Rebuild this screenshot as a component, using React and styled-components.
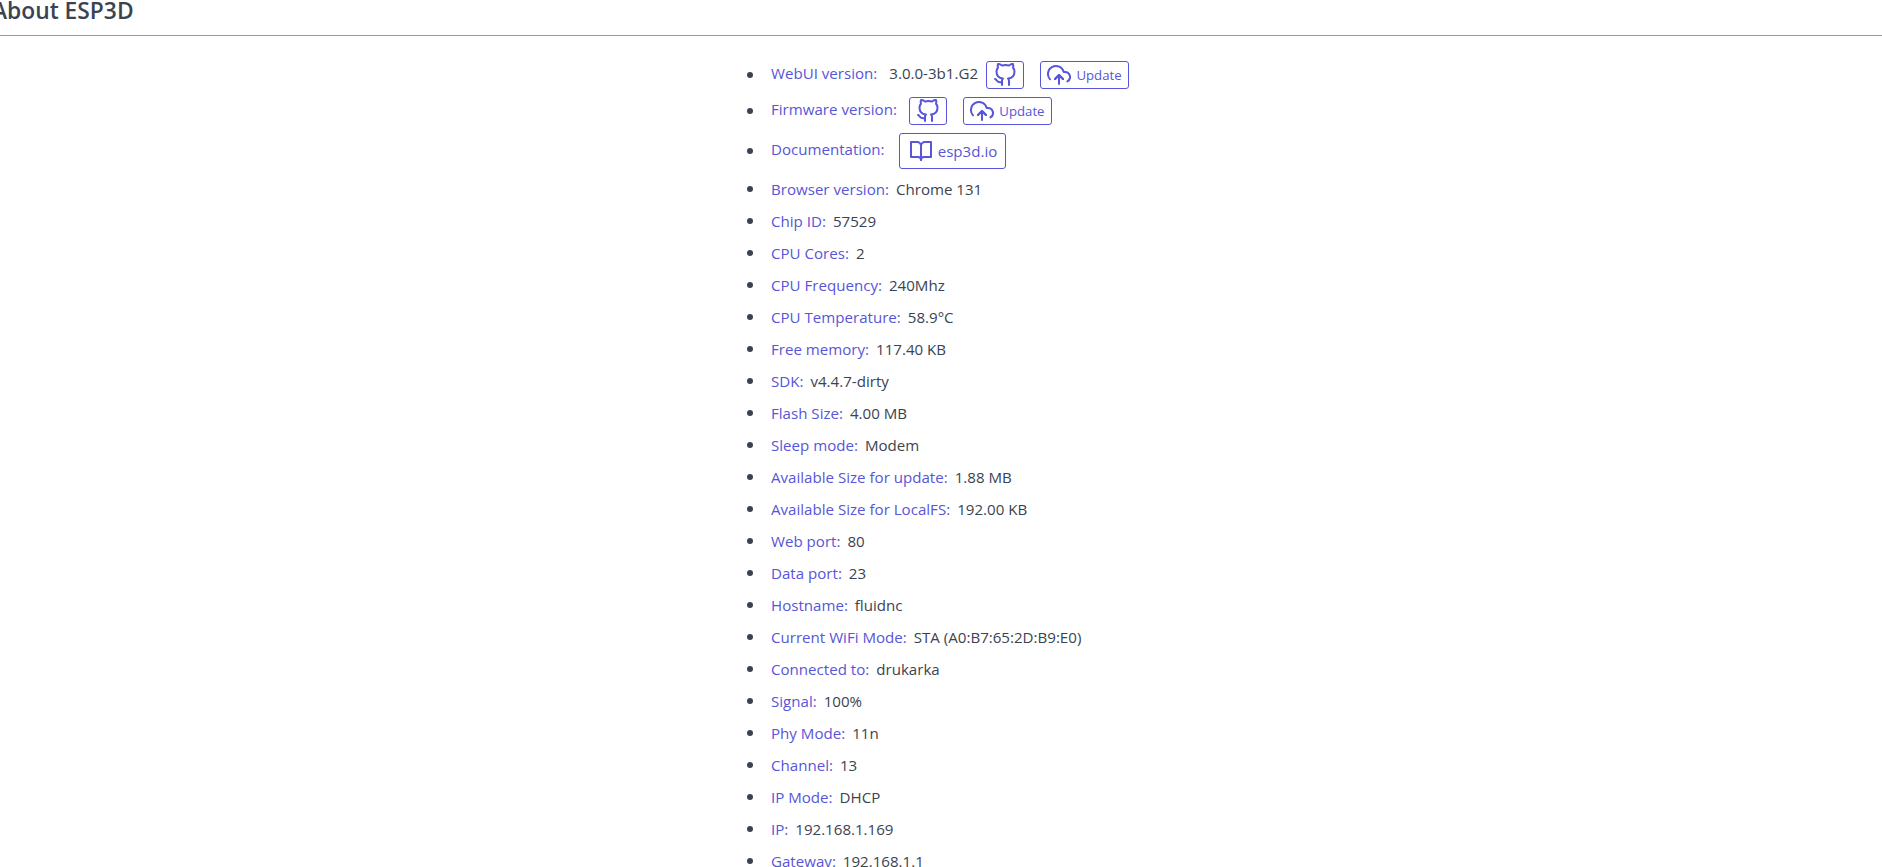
import styled, { createGlobalStyle } from 'styled-components';
import { FiGithub, FiUploadCloud, FiBookOpen } from 'react-icons/fi';

const GlobalStyle = createGlobalStyle`
  html, body {
    margin: 0;
    height: 100%;
    overflow: hidden;
    background: #fff;
  }
  body {
    font-family: 'Open Sans', 'Noto Sans', sans-serif;
    font-size: 15.1px;
    color: #3b4351;
  }
`;

const Page = styled.div`
  height: 867px;
  overflow: hidden;
`;

const Header = styled.div`
  height: 35px;
  border-bottom: 1px solid #999;
  margin-bottom: 25px;
`;

const Title = styled.h4`
  margin: 0 0 0 -8px;
  font-size: 22.8px;
  font-weight: 600;
  line-height: 22px;
  color: #3b4351;
`;

const List = styled.ul`
  list-style: none;
  margin: 0;
  padding: 0 0 0 747px;
`;

const Item = styled.li`
  display: flex;
  align-items: center;
  min-height: ${(p) => p.$height || 32}px;
  margin-bottom: ${(p) => p.$gap || 0}px;
  white-space: nowrap;
  &::before {
    content: '';
    width: 6px;
    height: 6px;
    border-radius: 50%;
    background: #3b4351;
    margin-right: 18px;
  }
`;

const Label = styled.span`
  color: #5755d9;
  margin-right: ${(p) => p.$gap || 7}px;
  padding-bottom: ${(p) => p.$lift || 0}px;
`;

const Value = styled.span`
  margin-right: 8px;
  padding-bottom: ${(p) => p.$lift || 0}px;
`;

const Button = styled.a`
  display: inline-flex;
  align-items: center;
  justify-content: center;
  gap: 5px;
  box-sizing: border-box;
  height: ${(p) => p.$height || 28}px;
  width: ${(p) => p.$width}px;
  margin-right: 16px;
  border: 1px solid #5755d9;
  border-radius: 3px;
  color: #5755d9;
  font-size: ${(p) => p.$fontSize || 13.2}px;
  svg {
    flex: none;
    width: ${(p) => p.$icon || 24}px;
    height: ${(p) => p.$icon || 24}px;
  }
`;

const GithubButton = () => (
  <Button $width={38}>
    <FiGithub />
  </Button>
);

const UpdateButton = () => (
  <Button $width={89}>
    <FiUploadCloud />
    Update
  </Button>
);

const rows = [
  ['Browser version', 'Chrome 131'],
  ['Chip ID', '57529'],
  ['CPU Cores', '2'],
  ['CPU Frequency', '240Mhz'],
  ['CPU Temperature', '58.9°C'],
  ['Free memory', '117.40 KB'],
  ['SDK', 'v4.4.7-dirty'],
  ['Flash Size', '4.00 MB'],
  ['Sleep mode', 'Modem'],
  ['Available Size for update', '1.88 MB'],
  ['Available Size for LocalFS', '192.00 KB'],
  ['Web port', '80'],
  ['Data port', '23'],
  ['Hostname', 'fluidnc'],
  ['Current WiFi Mode', 'STA (A0:B7:65:2D:B9:E0)'],
  ['Connected to', 'drukarka'],
  ['Signal', '100%'],
  ['Phy Mode', '11n'],
  ['Channel', '13'],
  ['IP Mode', 'DHCP'],
  ['IP', '192.168.1.169'],
  ['Gateway', '192.168.1.1'],
];

export default function App() {
  return (
    <Page>
      <GlobalStyle />
      <Header>
        <Title>About ESP3D</Title>
      </Header>
      <List>
        <Item $height={28} $gap={8}>
          <Label $gap={12} $lift={4}>WebUI version:</Label>
          <Value $lift={4}>3.0.0-3b1.G2</Value>
          <GithubButton />
          <UpdateButton />
        </Item>
        <Item $height={28} $gap={8}>
          <Label $gap={12} $lift={4}>Firmware version:</Label>
          <GithubButton />
          <UpdateButton />
        </Item>
        <Item $height={36} $gap={4}>
          <Label $gap={15} $lift={4}>Documentation:</Label>
          <Button $width={107} $height={36} $fontSize={15.1} $icon={24}>
            <FiBookOpen />
            esp3d.io
          </Button>
        </Item>
        {rows.map(([label, value]) => (
          <Item key={label}>
            <Label>{label}:</Label>
            <Value>{value}</Value>
          </Item>
        ))}
      </List>
    </Page>
  );
}
